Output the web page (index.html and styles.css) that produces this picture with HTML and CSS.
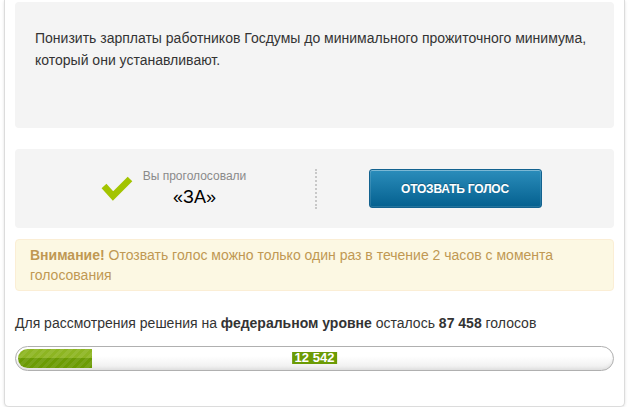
FILE: index.html
```html
<!DOCTYPE html>
<html lang="ru">
    <head>
        <meta charset="utf-8">
        <title>Петиция</title>
        <link rel="stylesheet" href="styles.css">
    </head>
    <body>
        <div class="Card">
            <div class="PetitionText">
                <p>Понизить зарплаты работников Госдумы до минимального прожиточного минимума, который они устанавливают.</p>
            </div>

            <div class="VoteBlock">
                <div class="VoteDone">
                    <svg class="Check" width="32" height="26" viewBox="0 0 32 26">
                        <polyline points="3,11 12,21 29,4" fill="none" stroke="#a3c400" stroke-width="6.5"/>
                    </svg>
                    <div class="VoteLabel">
                        <span class="VoteSmall">Вы проголосовали</span>
                        <span class="VoteBig">«ЗА»</span>
                    </div>
                </div>
                <div class="Divider"></div>
                <div class="VoteAction">
                    <button class="RevokeBtn" type="button">ОТОЗВАТЬ ГОЛОС</button>
                </div>
            </div>

            <div class="Warning">
                <b>Внимание!</b> Отозвать голос можно только один раз в течение 2 часов с момента голосования
            </div>

            <p class="Remaining">Для рассмотрения решения на <b>федеральном уровне</b> осталось <b>87 458</b> голосов</p>

            <div class="Progress">
                <div class="ProgressFill" style="width: 12.4%"></div>
                <span class="ProgressCount">12 542</span>
            </div>
        </div>
    </body>
</html>
```

FILE: styles.css
```css
body{
    margin: 0;
    background: #ffffff;
    font-family: "Liberation Sans", Arial, sans-serif;
    color: #333333;
}

.Card{
    margin: 0 4px;
    padding: 2px 10px 35px;
    background: #ffffff;
    border: 1px solid #dcdcdc;
    border-top: none;
    border-radius: 0 0 5px 5px;
    box-shadow: 0 1px 3px rgba(0, 0, 0, 0.12);
}

.PetitionText{
    background: #f4f4f4;
    border-radius: 4px;
    height: 126px;
    box-sizing: border-box;
    padding: 25px 20px 0;
}

.PetitionText p{
    margin: 0;
    font-size: 14px;
    line-height: 22px;
    color: #333333;
}

.VoteBlock{
    margin-top: 21px;
    background: #f4f4f4;
    border-radius: 4px;
    height: 79px;
    display: flex;
    align-items: center;
}

.VoteDone{
    flex: 0 0 300px;
    box-sizing: border-box;
    display: flex;
    align-items: center;
    justify-content: center;
    padding-left: 17px;
    gap: 10px;
}

.Check{
    display: block;
    margin-top: -1px;
}

.VoteLabel{
    display: flex;
    flex-direction: column;
    align-items: center;
}

.VoteSmall{
    font-size: 12px;
    line-height: 15px;
    color: #8a8a8a;
}

.VoteBig{
    font-size: 18px;
    line-height: 22px;
    color: #000000;
    margin-top: 2px;
}

.Divider{
    width: 0;
    height: 40px;
    border-left: 2px dotted #c8c8c8;
}

.VoteAction{
    flex: 1;
    display: flex;
    justify-content: center;
    padding-right: 21px;
}

.RevokeBtn{
    width: 173px;
    height: 39px;
    border: 1px solid #13628f;
    border-radius: 3px;
    background: linear-gradient(to bottom, #2b8dbb, #04608f);
    box-shadow: inset 0 1px 0 rgba(255, 255, 255, 0.3), inset 0 0 0 1px rgba(255, 255, 255, 0.12);
    color: #ffffff;
    font-family: "Liberation Sans", Arial, sans-serif;
    font-weight: bold;
    font-size: 12px;
    letter-spacing: -0.2px;
    text-shadow: 0 -1px 0 rgba(0, 0, 0, 0.25);
}

.Warning{
    margin-top: 11px;
    padding: 5px 14px;
    background: #fcf8e3;
    border: 1px solid #fbeed5;
    border-radius: 4px;
    color: #c09853;
    font-size: 14px;
    line-height: 20px;
}

.Remaining{
    margin: 22px 0 0;
    font-size: 14px;
    line-height: 20px;
    color: #333333;
}

.Progress{
    position: relative;
    margin-top: 13px;
    height: 25px;
    box-sizing: border-box;
    border: 1px solid #b0b0b0;
    border-radius: 13px;
    padding: 2px;
    background: linear-gradient(to bottom, #ffffff 40%, #ececec);
    box-shadow: inset 0 -2px 3px rgba(0, 0, 0, 0.06);
}

.ProgressFill{
    height: 100%;
    border-radius: 10px 0 0 10px;
    background:
        repeating-linear-gradient(135deg, rgba(255, 255, 255, 0.08) 0 3px, rgba(0, 0, 0, 0) 3px 6px),
        linear-gradient(to bottom, #8db522 0, #8db522 50%, #6b9b04 50%, #6b9b04 100%);
}

.ProgressCount{
    position: absolute;
    left: 50%;
    top: 5px;
    transform: translateX(-50%);
    background: #6b9b04;
    color: #ffffff;
    font-weight: bold;
    font-size: 13px;
    line-height: 12px;
    padding: 0 3px;
}
```
